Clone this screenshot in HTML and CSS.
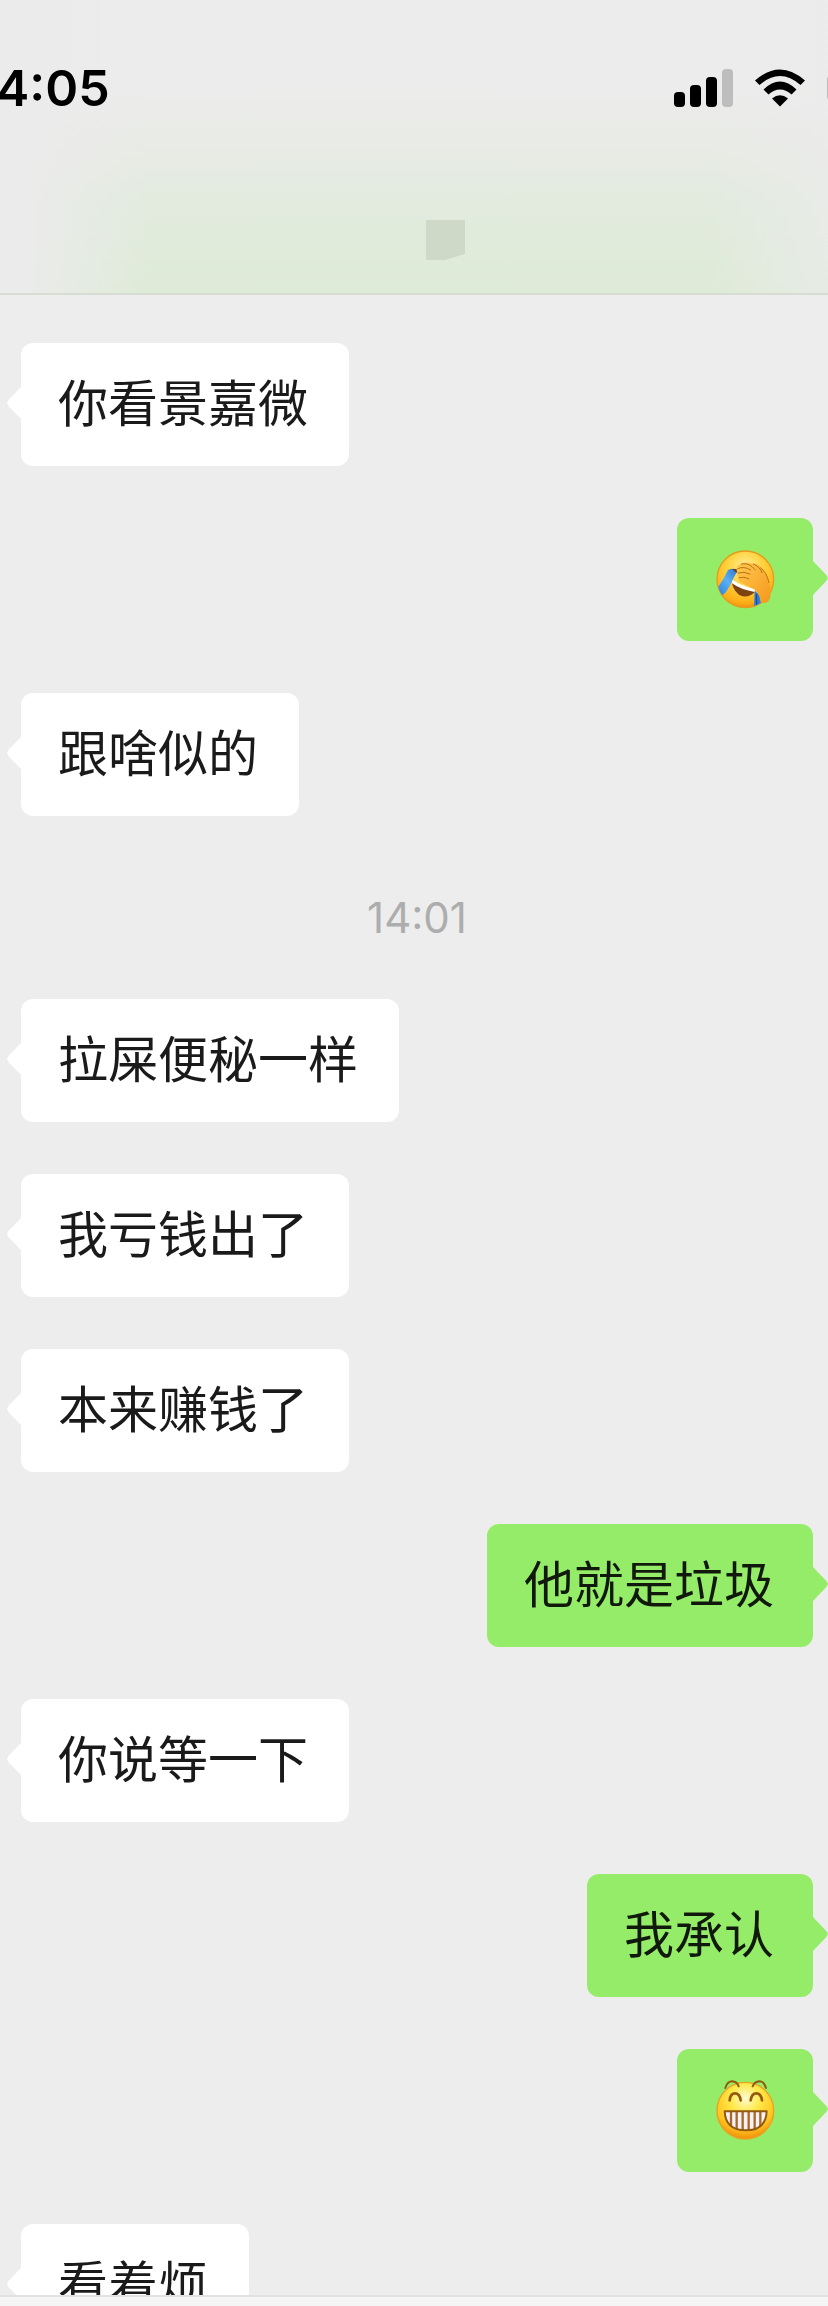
FILE: index.html
```html
<!DOCTYPE html>
<html lang="zh-CN">
<head>
    <meta charset="UTF-8">
    <meta name="viewport" content="width=device-width, initial-scale=1.0">
    <title>聊天</title>
    <link rel="stylesheet" href="styles.css">
</head>
<body>

    <header class="header">
        <div class="status-bar">
            <span class="clock">4:05</span>
            <svg class="status-icons" viewBox="0 0 154 40" aria-hidden="true">
                <!-- Signal -->
                <rect x="0" y="24" width="11" height="15" rx="4"/>
                <rect x="16" y="17" width="11" height="22" rx="4"/>
                <rect x="32" y="9" width="11" height="30" rx="4"/>
                <rect x="48" y="1" width="11" height="38" rx="4" fill="#bdbdbd"/>
                <!-- Wifi -->
                <path d="M81 12.500 Q106 -9.500 131 12.500 L126.500 17 Q106 -1 85.500 17 Z"/>
                <path d="M89.500 21.500 Q106 5.500 122.500 21.500 L117.500 26.500 Q106 16.500 94.500 26.500 Z"/>
                <path d="M98 30.500 Q106 24 114 30.500 L106 38.500 Z"/>
                <!-- Battery edge -->
                <rect x="153" y="8" width="8" height="24" rx="3" fill="#bdbdbd"/>
            </svg>
        </div>
        <div class="title-bar">
            <svg class="title-mark" viewBox="0 0 39 40" aria-hidden="true">
                <path d="M0 0H39V34L19 40H0Z"/>
            </svg>
        </div>
    </header>

    <main class="chat">
        <div class="message received">你看景嘉微</div>
        <div class="message sent emoji">
            <svg viewBox="168 148 177 177" role="img" aria-label="捂脸">
                <defs>
                    <radialGradient id="palmFace" cx="50%" cy="30%" r="72%">
                        <stop offset="0" stop-color="#fff09c"/>
                        <stop offset="0.45" stop-color="#ffd23c"/>
                        <stop offset="0.85" stop-color="#ffae17"/>
                        <stop offset="1" stop-color="#e68a14"/>
                    </radialGradient>
                    <linearGradient id="hand" x1="0" y1="0" x2="1" y2="1">
                        <stop offset="0" stop-color="#ffc94e"/>
                        <stop offset="1" stop-color="#f5981c"/>
                    </linearGradient>
                    <linearGradient id="tear" x1="1" y1="0" x2="0" y2="1">
                        <stop offset="0" stop-color="#2c72c4"/>
                        <stop offset="0.5" stop-color="#5bb0f5"/>
                        <stop offset="1" stop-color="#2b80dc"/>
                    </linearGradient>
                </defs>
                <circle cx="256" cy="236" r="85" fill="url(#palmFace)" stroke="#e89a1c" stroke-width="4"/>
                <path d="M214 240 Q250 262 288 270 Q272 290 248 287 Q222 280 214 240Z" fill="#7d4310"/>
                <path d="M214 236 Q248 258 288 266 L284 274 Q244 268 216 248Z" fill="#fff"/>
                <path d="M204 208 Q218 200 234 208 Q222 228 212 250 Q202 272 188 284 Q178 274 175 258 Q192 234 204 208Z" fill="url(#tear)"/>
                <path d="M216 205 L238 206 L230 216Z" fill="#6b3a12"/>
                <path d="M284 272 L300 282 L302 308 L282 316Z" fill="#2d7fdc"/>
                <path d="M289 280 L290 312" stroke="#174a91" stroke-width="4"/>
                <path d="M230 206 Q228 195 242 190 Q260 182 276 189 Q290 186 304 200 Q322 216 327 246 Q334 268 331 288 Q328 306 312 307 Q301 307 299 290 Q292 270 276 262 L244 247 Q230 238 236 229 Q227 225 234 216 Q229 212 230 206Z" fill="url(#hand)"/>
                <path d="M233 204 Q252 195 272 208 M234 217 Q252 211 270 220 M237 231 Q252 227 266 234 M244 190 Q268 184 286 208 M280 190 Q300 198 306 216 M302 202 Q320 214 327 246" fill="none" stroke="#b87317" stroke-width="3" stroke-linecap="round"/>
            </svg>
        </div>
        <div class="message received">跟啥似的</div>
        <time class="time">14:01</time>
        <div class="message received">拉屎便秘一样</div>
        <div class="message received">我亏钱出了</div>
        <div class="message received">本来赚钱了</div>
        <div class="message sent">他就是垃圾</div>
        <div class="message received">你说等一下</div>
        <div class="message sent">我承认</div>
        <div class="message sent emoji">
            <svg viewBox="168 151 177 177" role="img" aria-label="呲牙">
                <defs>
                    <radialGradient id="grinFace" cx="50%" cy="28%" r="74%">
                        <stop offset="0" stop-color="#fffbd0"/>
                        <stop offset="0.35" stop-color="#ffe94a"/>
                        <stop offset="0.75" stop-color="#ffc31f"/>
                        <stop offset="1" stop-color="#ee8709"/>
                    </radialGradient>
                    <clipPath id="mouth">
                        <path d="M194 242H320Q318 299 257 299Q196 299 194 242Z"/>
                    </clipPath>
                </defs>
                <circle cx="256" cy="240" r="85" fill="url(#grinFace)" stroke="#eda021" stroke-width="4"/>
                <g fill="none" stroke="#93590f" stroke-linecap="round">
                    <path d="M196 172 Q202 152 217 152 Q231 153 236 167 M278 167 Q284 153 298 152 Q312 152 318 172" stroke-width="6"/>
                    <path d="M209 209 Q211 188 225 188 Q239 188 242 209 M272 209 Q275 188 289 188 Q303 188 306 209" stroke-width="8"/>
                </g>
                <g clip-path="url(#mouth)">
                    <rect x="190" y="240" width="134" height="62" fill="#f6f1f3"/>
                    <path d="M213 240V302 M230 240V302 M248 240V302 M266 240V302 M284 240V302 M301 240V302" stroke="#a8672c" stroke-width="7"/>
                </g>
                <path d="M194 242H320Q318 299 257 299Q196 299 194 242Z" fill="none" stroke="#93590f" stroke-width="6" stroke-linejoin="round"/>
            </svg>
        </div>
        <div class="message received">看着烦</div>
    </main>

    <footer class="input-bar"></footer>

</body>
</html>
```

FILE: styles.css
```css
* {
    box-sizing: border-box;
}

body {
    margin: 0;
    height: 100vh;
    display: flex;
    flex-direction: column;
    overflow: hidden;
    background-color: #ededed;
    color: #1a1a1a;
    font-family: Inter, "Noto Sans CJK SC", sans-serif;
}

.header {
    flex: none;
    border-bottom: 2px solid #d8ddd4;
    background-color: #ececec;
    background-image:
        linear-gradient(to right, #ebebeb 3%, rgba(235, 235, 235, 0) 18%),
        linear-gradient(to left, rgba(235, 235, 235, 0.7) 0%, rgba(235, 235, 235, 0) 14%),
        linear-gradient(to bottom, #ececec 28%, #e8ebe5 52%, #e2ebde 70%, #deebd7 100%);
}

.status-bar {
    display: flex;
    justify-content: space-between;
    align-items: center;
    height: 176px;
    color: #000;
}

.clock {
    margin-left: -4px;
    font-size: 50px;
    font-weight: 600;
    line-height: 60px;
}

.status-icons {
    width: 154px;
    height: 40px;
}

.title-bar {
    display: flex;
    justify-content: center;
    height: 117px;
    padding: 44px 0 0 62px;
}

.title-mark {
    width: 39px;
    height: 40px;
    fill: #ced9c8;
}

.chat {
    flex: 1;
    min-height: 0;
    overflow: hidden;
    display: flex;
    flex-direction: column;
    gap: 52px;
    padding: 48px 15px 0 21px;
}

.message {
    position: relative;
    flex: none;
    padding: 24px 41px 24px 37px;
    border-radius: 12px;
    font-size: 50px;
    line-height: 75px;
}

/* Bubble tail */
.message::before {
    content: "";
    position: absolute;
    top: 43px;
    width: 15px;
    height: 34px;
}

.received {
    align-self: flex-start;
    background-color: #fff;
}

.received::before {
    left: -14px;
    background-color: #fff;
    clip-path: polygon(100% 0, 12% 40%, 0 50%, 12% 60%, 100% 100%);
}

.sent {
    align-self: flex-end;
    padding-right: 39px;
    background-color: #95ec69;
    color: #10190b;
}

.sent::before {
    right: -15px;
    background-color: #95ec69;
    clip-path: polygon(0 0, 90% 42%, 100% 50%, 90% 58%, 0 100%);
}

.emoji {
    padding: 32px 38px 32px 39px;
}

.emoji svg {
    display: block;
    width: 59px;
    height: 59px;
    overflow: visible;
}

.time {
    flex: none;
    padding: 25px 0 4px;
    color: #adadad;
    font-size: 42px;
    line-height: 50px;
    text-align: center;
}

.input-bar {
    flex: none;
    height: 11px;
    border-top: 2px solid #e2e2e2;
    background-color: #f5f5f5;
}
```
